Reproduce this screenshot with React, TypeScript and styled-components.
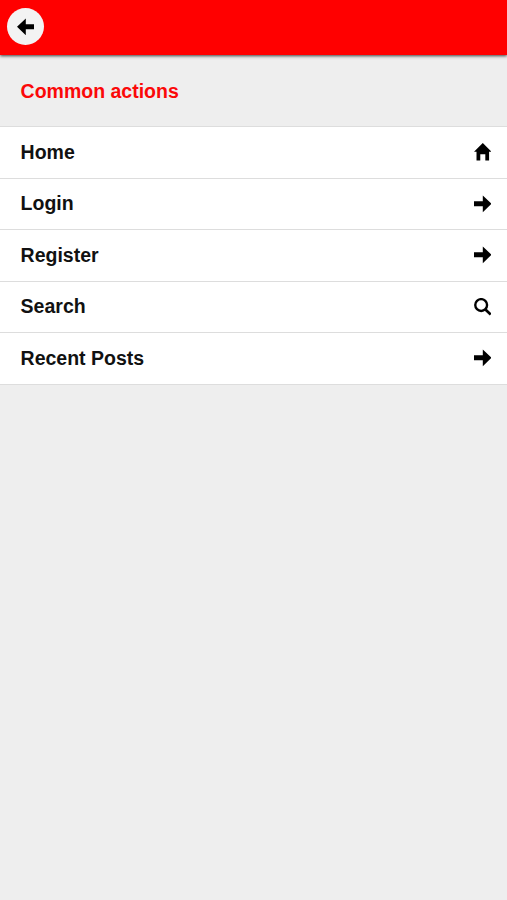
import React from "react";
import styled, { createGlobalStyle } from "styled-components";

const GlobalStyle = createGlobalStyle`
  * { box-sizing: border-box; }
  html, body { margin: 0; background: #eee; }
  body { font-family: "Liberation Sans", Arial, sans-serif; overflow: hidden; }
`;

const Page = styled.main`
  min-height: 100vh;
  background: #eee;
`;

const Header = styled.header`
  height: 55px;
  padding: 8px 7px;
  background: #f00;
  box-shadow: 0 1px 3px rgba(0, 0, 0, 0.75);
`;

const BackButton = styled.button`
  display: flex;
  align-items: center;
  justify-content: center;
  width: 37px;
  height: 37px;
  padding: 0;
  border: 0;
  border-radius: 50%;
  background: #f3f3f3;
`;

const Title = styled.h1`
  height: 71px;
  margin: 0;
  padding: 0 21px 0 20.6px;
  color: #fb0808;
  font-size: 19.5px;
  line-height: 73px;
`;

const List = styled.ul`
  margin: 0;
  padding: 0;
  list-style: none;
  border-bottom: 1px solid #ddd;
`;

const Item = styled.li`
  display: flex;
  align-items: center;
  justify-content: space-between;
  height: 51.5px;
  padding: 0 15.8px 0 20.6px;
  border-top: 1px solid #ddd;
  background: #fff;
  color: #111;
  font-size: 19.5px;
  font-weight: bold;
`;

const Icon = styled.svg`
  display: block;
  width: 17.6px;
  height: 17.6px;
  fill: #000;
`;

type IconName = "left" | "right" | "home" | "search";

const shapes: Record<IconName, React.ReactNode> = {
  left: <polygon points="7,5 7,0.3 0,7 7,13.7 7,9 14,9 14,5" />,
  right: <polygon points="7,5 7,0.3 14,7 7,13.7 7,9 0,9 0,5" />,
  home: <polygon points="7,0 0,7 2,7 2,14 5,14 5,9 9,9 9,14 12,14 12,7 14,7" />,
  search: (
    <g fill="none" stroke="#000" strokeWidth="1.9">
      <circle cx="5.7" cy="5.6" r="4.7" />
      <path d="M8.9 8.9 13.3 13.2" strokeWidth="2.2" />
    </g>
  ),
};

const Glyph = ({ name }: { name: IconName }) => (
  <Icon viewBox="0 0 14 14" aria-hidden="true">{shapes[name]}</Icon>
);

const actions: { label: string; icon: IconName }[] = [
  { label: "Home", icon: "home" },
  { label: "Login", icon: "right" },
  { label: "Register", icon: "right" },
  { label: "Search", icon: "search" },
  { label: "Recent Posts", icon: "right" },
];

export default function App() {
  return (
    <Page>
      <GlobalStyle />
      <Header>
        <BackButton aria-label="Back"><Glyph name="left" /></BackButton>
      </Header>
      <Title>Common actions</Title>
      <List>
        {actions.map(({ label, icon }) => (
          <Item key={label}>
            <span>{label}</span>
            <Glyph name={icon} />
          </Item>
        ))}
      </List>
    </Page>
  );
}
